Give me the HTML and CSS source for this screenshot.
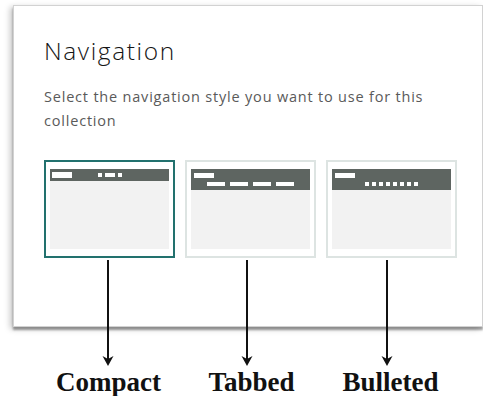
FILE: index.html
```html
<!DOCTYPE html>
<html lang="en">
<head>
  <meta charset="UTF-8">
  <meta name="viewport" content="width=device-width, initial-scale=1.0">
  <title>Navigation styles</title>
  <link rel="stylesheet" href="styles.css">
</head>
<body>
  <div class="panel">
    <h1>Navigation</h1>
    <p class="hint">Select the navigation style you want to use for this collection</p>
    <div class="options">
      <div class="option selected">
        <div class="screen">
          <div class="bar compact">
            <span class="logo"></span>
            <span class="dots">
              <i class="dot"></i><i class="dot wide"></i><i class="dot"></i>
            </span>
          </div>
        </div>
      </div>
      <div class="option">
        <div class="screen">
          <div class="bar tall">
            <span class="logo"></span>
            <span class="tabs">
              <i class="tab"></i><i class="tab"></i><i class="tab"></i><i class="tab"></i>
            </span>
          </div>
        </div>
      </div>
      <div class="option">
        <div class="screen">
          <div class="bar tall">
            <span class="logo"></span>
            <span class="bullets">
              <i class="bullet"></i><i class="bullet"></i><i class="bullet"></i><i class="bullet"></i>
              <i class="bullet"></i><i class="bullet"></i><i class="bullet"></i><i class="bullet"></i>
            </span>
          </div>
        </div>
      </div>
    </div>
  </div>

  <div class="labels">
    <div class="label">
      <svg class="arrow" width="12" height="106" viewBox="0 0 12 106"><line x1="6" y1="0" x2="6" y2="100" stroke="#111" stroke-width="2"/><path d="M0.5 96 L6 106 L11.5 96 L6 99 Z" fill="#111"/></svg>
      Compact
    </div>
    <div class="label">
      <svg class="arrow" width="12" height="106" viewBox="0 0 12 106"><line x1="6" y1="0" x2="6" y2="100" stroke="#111" stroke-width="2"/><path d="M0.5 96 L6 106 L11.5 96 L6 99 Z" fill="#111"/></svg>
      Tabbed
    </div>
    <div class="label">
      <svg class="arrow" width="12" height="106" viewBox="0 0 12 106"><line x1="6" y1="0" x2="6" y2="100" stroke="#111" stroke-width="2"/><path d="M0.5 96 L6 106 L11.5 96 L6 99 Z" fill="#111"/></svg>
      Bulleted
    </div>
  </div>
</body>
</html>
```

FILE: styles.css
```css
body {
  margin: 0;
  background: #fff;
  font-family: "Open Sans", sans-serif;
}
.panel {
  margin: 5px 0 0 13px;
  padding: 30px 0 68px 30px;
  border: 1px solid #d2d2d2;
  background: #fff;
  box-shadow: 0 3px 2px rgba(0, 0, 0, 0.35), -3px 2px 6px rgba(0, 0, 0, 0.22);
}
h1 {
  margin: 0;
  font-size: 24.5px;
  font-weight: 300;
  letter-spacing: 1.6px;
  line-height: 1.2;
  color: #151515;
}
.hint {
  width: 410px;
  margin: 20px 0 0;
  font-size: 14.5px;
  letter-spacing: 0.8px;
  line-height: 24px;
  color: #5a5a5a;
}
.options {
  display: flex;
  gap: 10px;
  margin-top: 27px;
}
.option {
  box-sizing: border-box;
  width: 131px;
  height: 98px;
  padding: 7px 4px;
  border: 2px solid #dde4e2;
}
.option.selected {
  border-color: #22716e;
}
.screen {
  height: 100%;
  background: #f2f2f2;
}
.bar {
  background: #5e6561;
}
.bar i {
  display: block;
  background: #fff;
}
.logo {
  display: block;
  width: 20px;
  height: 5px;
  background: #fff;
}
.compact {
  display: grid;
  grid-template-columns: 1fr auto 1fr;
  align-items: center;
  height: 12px;
  padding: 0 2px;
}
.compact .logo {
  height: 6px;
}
.dots {
  display: flex;
  gap: 3px;
}
.dot {
  width: 4px;
  height: 4px;
}
.dot.wide {
  width: 10px;
}
.tall {
  height: 21px;
  padding-top: 4px;
  box-sizing: border-box;
}
.tall .logo {
  margin-left: 3px;
}
.tabs, .bullets {
  display: flex;
  justify-content: center;
  margin-top: 4px;
}
.tabs {
  gap: 5px;
}
.tab {
  width: 18px;
  height: 4px;
}
.bullets {
  gap: 3px;
}
.bullet {
  width: 4px;
  height: 4px;
}
.labels {
  display: flex;
  gap: 10px;
  margin: 42px 0 0 43px;
}
.label {
  position: relative;
  box-sizing: border-box;
  width: 131px;
  text-align: center;
  font-family: "Liberation Serif", serif;
  font-weight: bold;
  font-size: 27px;
  line-height: 27px;
  color: #111;
}
.label:nth-child(2) {
  padding-left: 4px;
}
.arrow {
  position: absolute;
  top: -109px;
  left: 59px;
}
.label:nth-child(2) .arrow {
  left: 57px;
}
.label:nth-child(3) .arrow {
  left: 56px;
}
```
